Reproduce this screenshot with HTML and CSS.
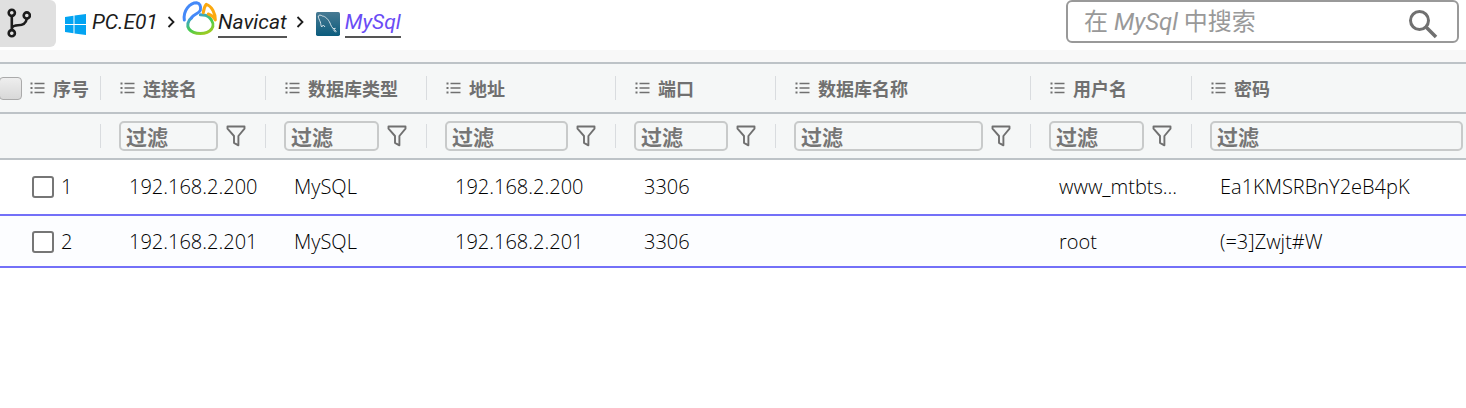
FILE: index.html
```html
<!DOCTYPE html>
<html lang="zh-CN">
<head>
<meta charset="utf-8">
<title>MySql</title>
<link rel="stylesheet" href="styles.css">
</head>
<body>
<svg class="defs" aria-hidden="true">
  <symbol id="list" viewBox="0 0 14 12"><path d="M0 1.5h2M0 6h2M0 10.5h2" stroke="currentColor" stroke-width="2"/><path d="M4 1.5h10M4 6h10M4 10.5h10" stroke="currentColor" stroke-width="1.5"/></symbol>
  <symbol id="funnel" viewBox="0 0 20 22"><path d="M1.5 1.5h17v2.2L12.4 11v9.3L8 17.8V11L1.5 3.7z" fill="none" stroke="currentColor" stroke-width="1.9" stroke-linejoin="round"/></symbol>
</svg>
<header class="topbar">
  <button class="branch" type="button" aria-label="分支">
    <svg viewBox="0 0 24 30" width="24" height="30"><g fill="none" stroke="#1c1c1c" stroke-width="2.6"><circle cx="4.800" cy="4.800" r="3.100"/><circle cx="4.800" cy="25.200" r="3.100"/><circle cx="19.800" cy="7.500" r="3.100"/><path d="M4.800 8v14M5 20c1-2.500 3.500-2.800 6-2.800 5 0 8-1.500 8.800-6.600"/></g></svg>
  </button>
  <nav class="crumbs">
    <svg class="win" viewBox="0 0 21 21" width="21" height="21"><path fill="#03a4f2" d="M0 3l8.500-1.300v8.300H0zM9.500 1.500L21 0v10H9.500zM0 11h8.500v8.300L0 18zM9.500 11H21v10L9.500 19.500z"/></svg>
    <span class="crumb">PC.E01</span>
    <svg class="chev" viewBox="0 0 8 12" width="8" height="12"><path d="M1.500 1l5 5-5 5" fill="none" stroke="#1c1c1c" stroke-width="1.800"/></svg>
    <svg class="navicat" viewBox="0 0 111 108" width="37" height="36">
      <defs><linearGradient id="ring" x1=".2" y1="0" x2=".8" y2="1"><stop offset="0" stop-color="#3a96ee"/><stop offset=".55" stop-color="#45cc50"/><stop offset="1" stop-color="#a4cc20"/></linearGradient></defs>
      <g fill="none" stroke-width="9" stroke-linejoin="round" stroke-linecap="round">
        <path stroke="url(#ring)" d="M31 54C20 62 17 78 24 87 38 105 78 105 92 87 99 77 96 63 85 52 78 45 68 44 58 44"/>
        <path stroke="#4489f8" d="M10 60C6 32 26 8 47 8c9 1 14 11 11 23-6 12-20 10-27 23"/>
        <path stroke="#fba90f" d="M67 38c1-10 3-18 9-25 16 5 28 28 27 47-5-11-12-15-21-18"/>
      </g>
    </svg>
    <a class="crumb link" href="#">Navicat</a>
    <svg class="chev" viewBox="0 0 8 12" width="8" height="12"><path d="M1.500 1l5 5-5 5" fill="none" stroke="#1c1c1c" stroke-width="1.800"/></svg>
    <svg class="mysql" viewBox="0 0 72 72" width="24" height="24">
      <defs><linearGradient id="sea" x1="0" y1="0" x2="0" y2="1"><stop offset="0" stop-color="#487a93"/><stop offset="1" stop-color="#0b5c7d"/></linearGradient></defs>
      <rect width="72" height="72" rx="5" fill="url(#sea)"/>
      <path d="M17 45c-3-4-2-9-4-15-3-7-7-14-6-18 2-4 8-3 12 0 9 1 18 10 23 21 3 7 5 14 13 19l6 7M17 45l5-6 5 6M50 50l9-1M52 53l7 8" fill="none" stroke="#d5e2e8" stroke-width="3"/>
    </svg>
    <a class="crumb link current" href="#">MySql</a>
  </nav>
  <label class="search">
    <input type="search" aria-label="在 MySql 中搜索" placeholder="在 MySql 中搜索">
    <svg viewBox="0 0 30 30" width="30" height="30"><g fill="none" stroke="#707070" stroke-width="3"><circle cx="11.500" cy="11.500" r="9"/><path d="M18.500 18.500L28 28" stroke-width="3.500"/></g></svg>
  </label>
</header>
<main class="panel">
<table class="grid">
  <colgroup><col class="c-index"><col class="c-conn"><col class="c-small"><col class="c-host"><col class="c-port"><col class="c-db"><col class="c-small"><col></colgroup>
  <thead>
    <tr class="titles">
      <th scope="col"><div class="head first"><input class="all" type="checkbox" aria-label="全选"><svg><use href="#list"/></svg>序号</div></th>
      <th scope="col"><div class="head"><svg><use href="#list"/></svg>连接名</div></th>
      <th scope="col"><div class="head"><svg><use href="#list"/></svg>数据库类型</div></th>
      <th scope="col"><div class="head"><svg><use href="#list"/></svg>地址</div></th>
      <th scope="col"><div class="head"><svg><use href="#list"/></svg>端口</div></th>
      <th scope="col"><div class="head"><svg><use href="#list"/></svg>数据库名称</div></th>
      <th scope="col"><div class="head"><svg><use href="#list"/></svg>用户名</div></th>
      <th scope="col"><div class="head"><svg><use href="#list"/></svg>密码</div></th>
    </tr>
    <tr class="filters">
      <td></td>
      <td><div class="filter"><input aria-label="过滤连接名" placeholder="过滤"><svg><use href="#funnel"/></svg></div></td>
      <td><div class="filter"><input aria-label="过滤数据库类型" placeholder="过滤"><svg><use href="#funnel"/></svg></div></td>
      <td><div class="filter"><input aria-label="过滤地址" placeholder="过滤"><svg><use href="#funnel"/></svg></div></td>
      <td><div class="filter"><input aria-label="过滤端口" placeholder="过滤"><svg><use href="#funnel"/></svg></div></td>
      <td><div class="filter"><input aria-label="过滤数据库名称" placeholder="过滤"><svg><use href="#funnel"/></svg></div></td>
      <td><div class="filter"><input aria-label="过滤用户名" placeholder="过滤"><svg><use href="#funnel"/></svg></div></td>
      <td><div class="filter last"><input aria-label="过滤密码" placeholder="过滤"></div></td>
    </tr>
  </thead>
  <tbody>
    <tr>
      <td><label class="pick"><input type="checkbox">1</label></td>
      <td>192.168.2.200</td><td>MySQL</td><td>192.168.2.200</td><td>3306</td><td></td><td>www_mtbts...</td><td>Ea1KMSRBnY2eB4pK</td>
    </tr>
    <tr class="alt">
      <td><label class="pick"><input type="checkbox">2</label></td>
      <td>192.168.2.201</td><td>MySQL</td><td>192.168.2.201</td><td>3306</td><td></td><td>root</td><td>(=3]Zwjt#W</td>
    </tr>
  </tbody>
</table>
</main>
</body>
</html>
```
FILE: styles.css
```css
* { box-sizing: border-box; }
body { margin: 0; background: #fff; color: #000; font-family: "Open Sans", "Noto Sans CJK SC", sans-serif; }
svg { flex: none; display: block; }
.defs { display: none; }

.topbar { display: flex; align-items: flex-start; height: 50px; padding-right: 7px; }
.branch { width: 56px; height: 47px; padding: 0 0 2px 7px; border: 0; border-radius: 0 6px 6px 0; background: #e0e0e0; }
.crumbs { display: flex; align-items: center; height: 48px; padding-left: 9px; font: italic 380 21px/32px Roboto, sans-serif; }
.crumb { align-self: flex-start; margin-top: 6px; color: #1c1c1c; }
.link { height: 32px; border-bottom: 2px solid #555; text-decoration: none; }
.current { color: #6a4cf5; }
.win { margin-right: 6px; }
.chev { margin: 0 6px 5px 9px; }
.navicat { align-self: flex-start; }
.mysql { margin: 0 5px 0 6px; }

.search { display: flex; align-items: center; width: 393px; height: 43px; margin-left: auto; padding: 0 19px 0 16px; border: 2px solid #999; border-radius: 6px; }
.search input { flex: 1; min-width: 0; padding: 0; border: 0; outline: 0; background: none; font: italic 380 24px/36px Roboto, "Noto Sans CJK SC", sans-serif; font-synthesis: none; }
.search input::placeholder { color: #999; }
.search svg { margin-top: 4px; }

.panel { padding-top: 12px; background: linear-gradient(#f8f8f8, #f8f8f8) top / 100% 13px no-repeat; }
.grid { width: 100%; table-layout: fixed; border-spacing: 0; border-top: 2px solid #bdc3c7; font-size: 20px; font-weight: 360; line-height: 26px; }
.c-index { width: 101px; }
.c-conn { width: 165px; }
.c-small { width: 161px; }
.c-host { width: 189px; }
.c-port { width: 160px; }
.c-db { width: 255px; }

thead th, thead td { padding: 0; border-bottom: 2px solid #bdc3c7; background: linear-gradient(#d9dcdf, #d9dcdf) right center / 1px 24px no-repeat #f5f7f7; color: #707070; }
thead tr > :last-child { background: #f5f7f7; }
.titles th { height: 50px; }
.filters td { height: 46px; }
.head { display: flex; align-items: center; gap: 8px; padding-left: 19px; font: bold 18px/26px "Noto Sans CJK SC", sans-serif; white-space: nowrap; }
.head svg { width: 15px; height: 12px; }
.first { padding-left: 0; }
.all { appearance: none; width: 23px; height: 23px; margin: 0 0 0 -1px; border: 1px solid #aaa; border-radius: 4px; background: linear-gradient(#eee, #d8d8d8); }
.filter { display: flex; align-items: center; gap: 8px; padding: 0 20px 0 18px; }
.filter input { flex: 1; min-width: 0; height: 30px; padding: 0 5px; border: 2px solid #c8caca; border-radius: 5px; background: none; font: bold 21px/26px "Noto Sans CJK SC", sans-serif; }
.filter input::placeholder { color: #757575; }
.filter svg { width: 20px; height: 22px; }
.filter.last { padding-right: 3px; }

tbody td { height: 56px; padding: 0 0 0 28px; border-bottom: 2px solid #7370f8; white-space: nowrap; }
tbody td:first-child { padding-left: 32px; }
.alt td { height: 52px; padding-top: 2px; background: #fcfdff; }
.pick { display: flex; align-items: center; gap: 7px; }
.pick input { appearance: none; width: 22px; height: 22px; margin: 0; border: 2px solid #767676; border-radius: 3px; background: #fff; }
```
